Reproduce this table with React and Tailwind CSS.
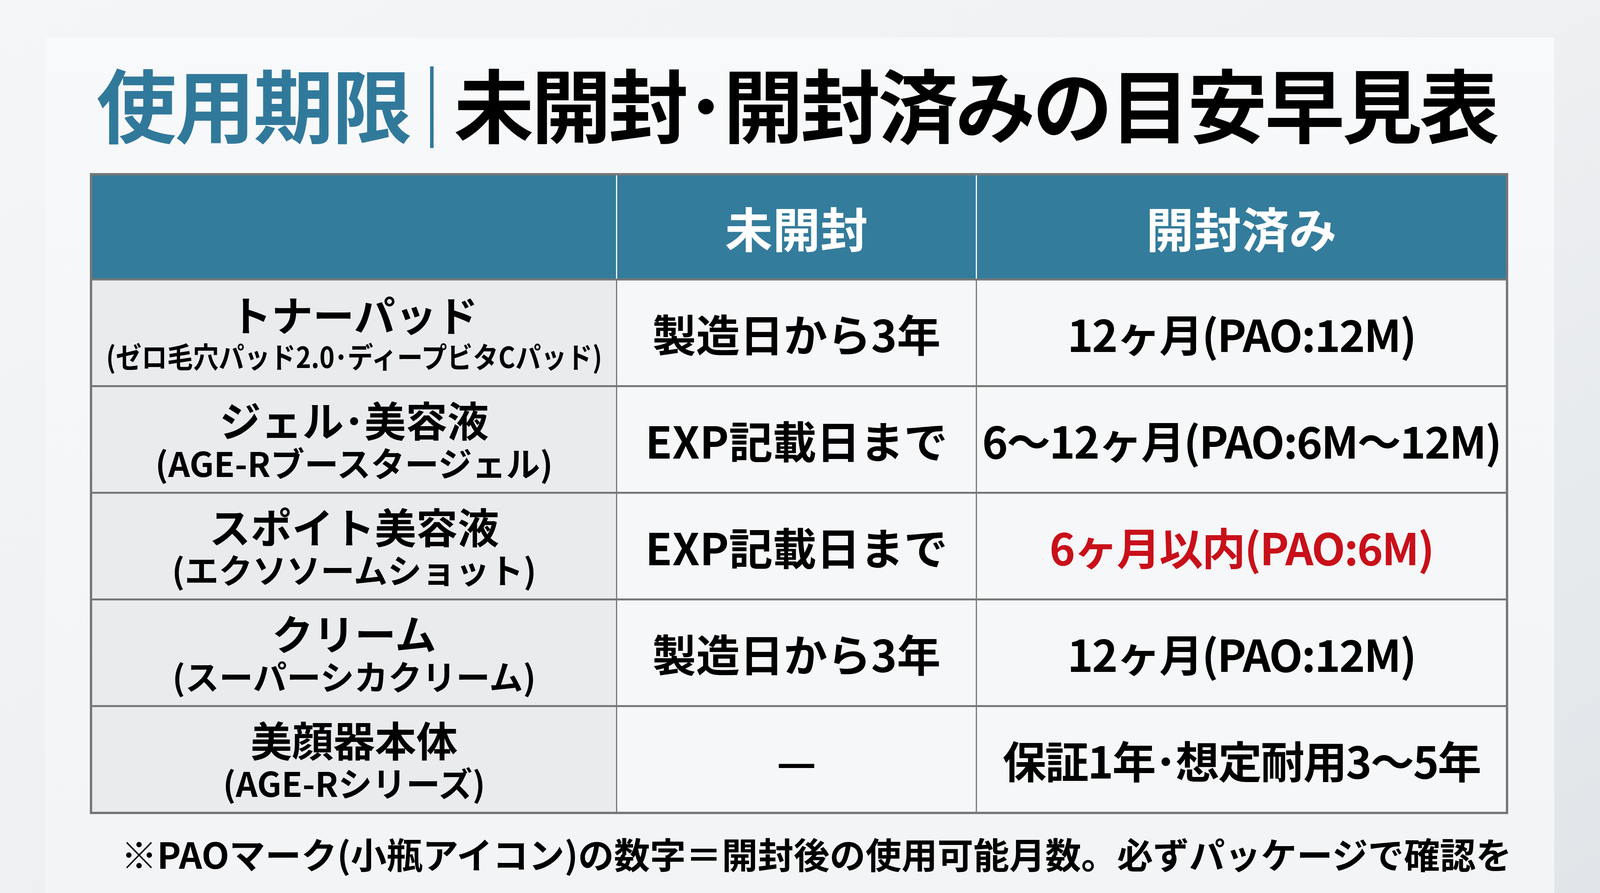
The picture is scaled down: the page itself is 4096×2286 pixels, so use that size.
import React from 'react';

const rows = [
  {
    name: 'トナーパッド',
    sub: '(ゼロ毛穴パッド2.0･ディープビタCパッド)',
    narrow: true,
    unopened: '製造日から3年',
    opened: '12ヶ月(PAO:12M)',
  },
  {
    name: 'ジェル･美容液',
    sub: '(AGE-Rブースタージェル)',
    unopened: 'EXP記載日まで',
    opened: '6～12ヶ月(PAO:6M～12M)',
  },
  {
    name: 'スポイト美容液',
    sub: '(エクソソームショット)',
    unopened: 'EXP記載日まで',
    opened: '6ヶ月以内(PAO:6M)',
    alert: true,
  },
  {
    name: 'クリーム',
    sub: '(スーパーシカクリーム)',
    unopened: '製造日から3年',
    opened: '12ヶ月(PAO:12M)',
  },
  {
    name: '美顔器本体',
    sub: '(AGE-Rシリーズ)',
    unopened: '—',
    opened: '保証1年･想定耐用3～5年',
  },
];

const App = () => {
  return (
    <div
      className="w-[4096px] h-[2286px] overflow-hidden bg-gradient-to-br from-[#f5f6f7] via-[#eef0f2] to-[#e1e5e9] pt-[96px] pl-[116px]"
      style={{ fontFamily: '"Noto Sans CJK JP", "Noto Sans", sans-serif' }}
    >
      <div className="w-[3863px] h-[2190px] bg-gradient-to-b from-[#f8f9fa] to-[#f2f4f6] px-[114px] pt-[62px] flex flex-col">
        {/* タイトル */}
        <div className="flex items-start h-[205px] pl-[17px] font-bold">
          <span className="shrink-0 text-[205px] leading-none tracking-[-4px] text-[#31799b] whitespace-nowrap">使用期限</span>
          <div className="shrink-0 w-[9px] h-[209px] bg-[#31799b] mt-[12px] ml-[50px] mr-[52px]" />
          <span className="shrink-0 text-[205px] leading-none tracking-[-7px] text-black whitespace-nowrap">
            未開封･開封済みの目安早見表
          </span>
        </div>

        {/* 表 */}
        <div className="mt-[80px] w-[3631px] border-[6px] border-[#777777] font-bold">
          <div className="flex h-[264px] bg-[#347c9c] text-white">
            <div className="shrink-0 w-[1341px]" />
            <div className="shrink-0 w-[921px] border-l-[3px] border-white flex items-center justify-center text-[122px] leading-none">
              未開封
            </div>
            <div className="flex-1 min-w-0 border-l-[3px] border-white flex items-center justify-center text-[122px] leading-none">
              開封済み
            </div>
          </div>

          {rows.map((row, i) => (
            <div key={i} className="flex h-[273px] border-t-[5px] border-[#777777]">
              <div className="shrink-0 w-[1341px] bg-[#e9ebed] flex flex-col items-center justify-center text-black">
                <div className="text-[106px] leading-[116px] whitespace-nowrap">{row.name}</div>
                {row.narrow ? (
                  <div className="text-[74px] leading-[100px] whitespace-nowrap scale-x-[0.89]">{row.sub}</div>
                ) : (
                  <div className="text-[87px] leading-[106px] whitespace-nowrap">{row.sub}</div>
                )}
              </div>
              <div className="shrink-0 w-[921px] border-l-[3px] border-[#777777] bg-[#f6f7f8] flex items-center justify-center text-[112px] leading-none text-black whitespace-nowrap">
                {row.unopened}
              </div>
              <div
                className={`flex-1 min-w-0 border-l-[3px] border-[#777777] bg-[#f6f7f8] flex items-center justify-center text-[112px] leading-none tracking-[-3px] whitespace-nowrap ${
                  row.alert ? 'text-[#c8101a]' : 'text-black'
                }`}
              >
                {row.opened}
              </div>
            </div>
          ))}
        </div>

        {/* 注記 */}
        <div className="mt-[54px] pl-[80px] text-[92px] leading-none font-bold text-black whitespace-nowrap">
          ※PAOマーク(小瓶アイコン)の数字＝開封後の使用可能月数。必ずパッケージで確認を
        </div>
      </div>
    </div>
  );
};

export default App;
